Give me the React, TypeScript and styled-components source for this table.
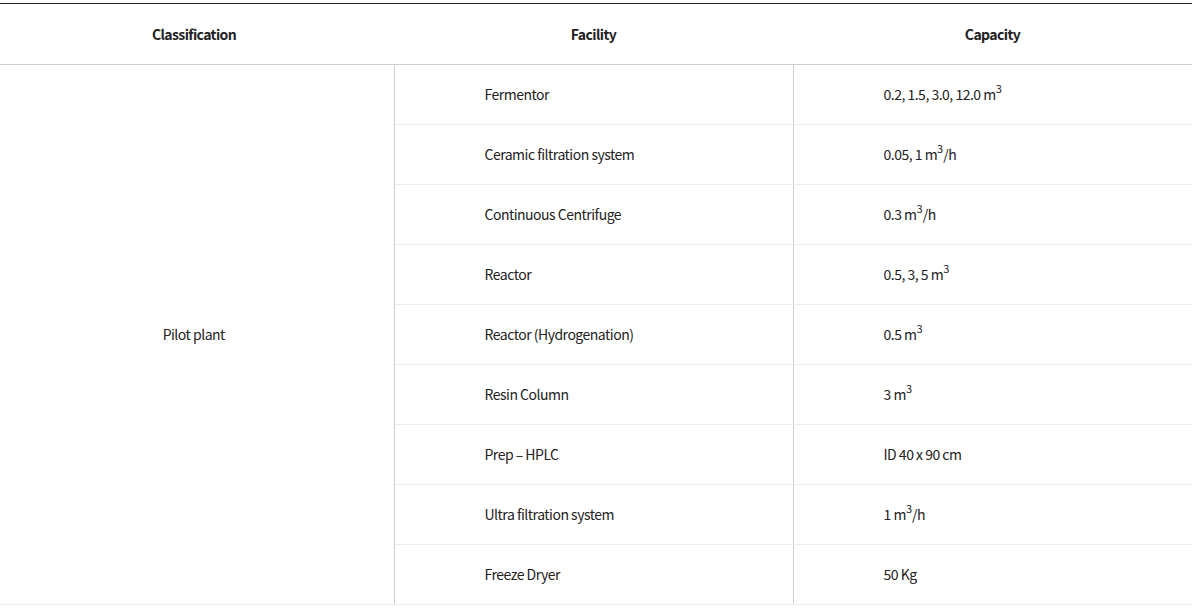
import React from "react";
import styled, { createGlobalStyle } from "styled-components";

const Global = createGlobalStyle`
  html, body { margin: 0; padding: 0; background: #fff; }
  body { font-family: "Noto Sans CJK KR", "Noto Sans", sans-serif; color: #222; }
`;

const Page = styled.div`
  padding-top: 3px;
  width: 1192px;
`;

const Table = styled.table`
  width: 1192px;
  border-collapse: collapse;
  table-layout: fixed;
  border-top: 1px solid #222;
  border-bottom: 1px solid #c8c8c8;
`;

const Th = styled.th<{ $padRight?: number }>`
  height: 59px;
  padding: 0 ${(p) => p.$padRight ?? 0}px 1px 0;
  font-size: 14px;
  font-weight: 700;
  letter-spacing: -0.6px;
  color: #222;
  text-align: center;
  border-bottom: 1px solid #cfcfcf;
`;

const Td = styled.td<{ $align?: string; $pad?: number; $padRight?: number; $rightLine?: boolean }>`
  height: 57px;
  padding: 0 ${(p) => p.$padRight ?? 0}px 2px ${(p) => p.$pad ?? 0}px;
  font-size: 14px;
  font-weight: 400;
  letter-spacing: -0.5px;
  color: #222;
  text-align: ${(p) => p.$align ?? "left"};
  vertical-align: middle;
  border-bottom: 1px solid #ececec;
  border-right: ${(p) => (p.$rightLine ? "1px solid #d0d0d0" : "none")};
`;

const Sup = styled.sup`
  font-size: 11px;
  line-height: 0;
  position: relative;
  top: -1px;
  letter-spacing: 0;
`;

const M3 = () => (
  <>
    m<Sup>3</Sup>
  </>
);

const rows: { facility: string; capacity: React.ReactNode }[] = [
  { facility: "Fermentor", capacity: <>0.2, 1.5, 3.0, 12.0 <M3 /></> },
  { facility: "Ceramic filtration system", capacity: <>0.05, 1 <M3 />/h</> },
  { facility: "Continuous Centrifuge", capacity: <>0.3 <M3 />/h</> },
  { facility: "Reactor", capacity: <>0.5, 3, 5 <M3 /></> },
  { facility: "Reactor (Hydrogenation)", capacity: <>0.5 <M3 /></> },
  { facility: "Resin Column", capacity: <>3 <M3 /></> },
  { facility: "Prep – HPLC", capacity: <>ID 40 x 90 cm</> },
  { facility: "Ultra filtration system", capacity: <>1 <M3 />/h</> },
  { facility: "Freeze Dryer", capacity: <>50 Kg</> },
];

export default function App() {
  return (
    <>
      <Global />
      <Page>
        <Table>
          <colgroup>
            <col style={{ width: 394 }} />
            <col style={{ width: 399 }} />
            <col style={{ width: 399 }} />
          </colgroup>
          <thead>
            <tr>
              <Th $padRight={6}>Classification</Th>
              <Th>Facility</Th>
              <Th>Capacity</Th>
            </tr>
          </thead>
          <tbody>
            {rows.map((r, i) => (
              <tr key={r.facility}>
                {i === 0 && (
                  <Td rowSpan={rows.length} $align="center" $padRight={6} $rightLine>
                    Pilot plant
                  </Td>
                )}
                <Td $pad={90} $rightLine>
                  {r.facility}
                </Td>
                <Td $pad={90}>{r.capacity}</Td>
              </tr>
            ))}
          </tbody>
        </Table>
      </Page>
    </>
  );
}
